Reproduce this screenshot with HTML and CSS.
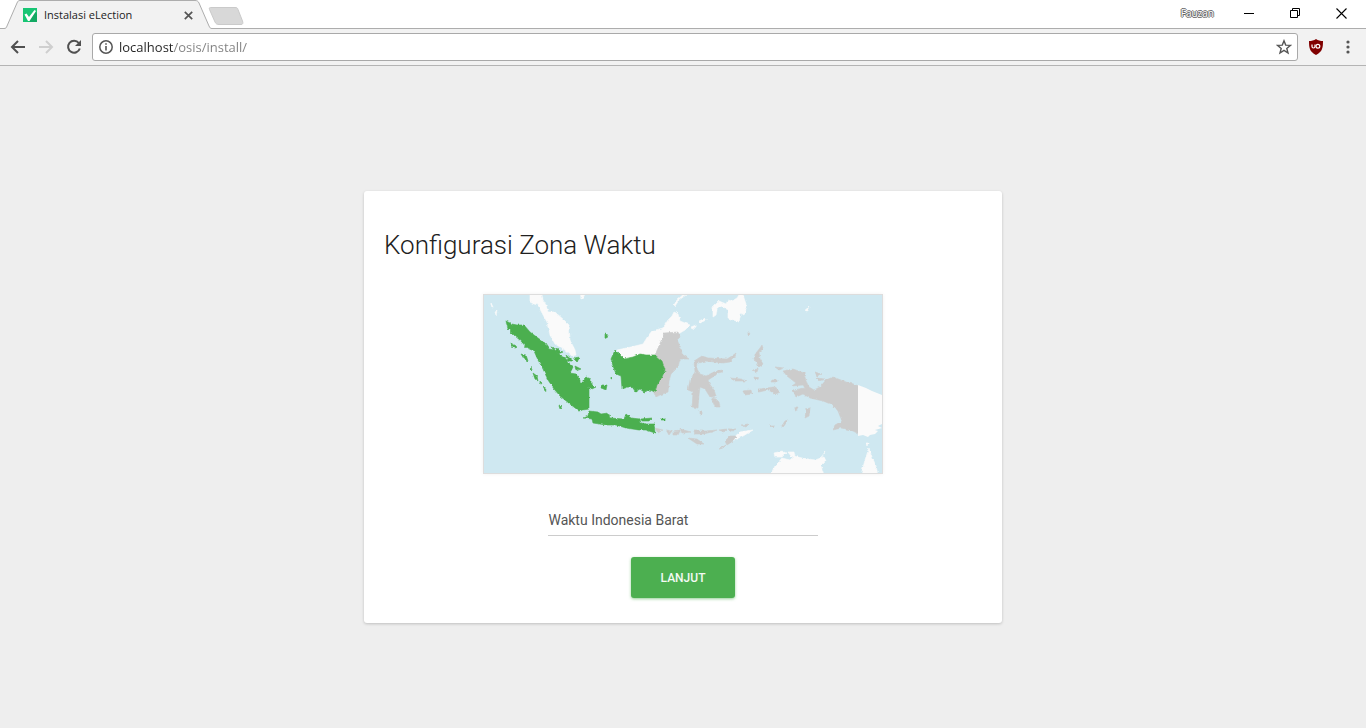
FILE: index.html
```html
<!DOCTYPE html>
<html lang="id">
<head>
<meta charset="utf-8">
<title>Instalasi eLection</title>
<link rel="stylesheet" href="styles.css">
</head>
<body>
<div class="browser">
  <header class="titlebar">
    <svg class="tab-shape" width="246" height="29" viewBox="0 0 246 29" aria-hidden="true">
      <path d="M0 28.500H4C6 28.500 6.500 27.500 7 26L17 3C18 .8 18.500.5 20 .5H195C197 .5 198 1 199 3L209 26C210 28 210.500 28.500 212 28.500V30H0Z" fill="#f2f2f2"/>
      <path d="M0 28.500H4C6 28.500 6.500 27.500 7 26L17 3C18 .8 18.500.5 20 .5H195C197 .5 198 1 199 3L209 26C210 28 210.500 28.500 212 28.500H246" fill="none" stroke="#adadad"/>
      <path d="M210.500 7.500H235C237 7.500 237.500 8 238 9.500L242.500 21C243.200 23 243 24.500 241 24.500H219C217 24.500 216 24 215 22L209.500 9.500C209 8 209.500 7.500 210.500 7.500Z" fill="#d8d8d8" stroke="#cacaca"/>
    </svg>
    <div class="tab">
      <svg class="favicon" width="14" height="14" viewBox="0 0 14 14" aria-hidden="true">
        <path d="M0 0H14V14H0Z" fill="#18c574"/>
        <path d="M12.500 4L14 5.500V14H7L5.500 12Z" fill="#13a963"/>
        <path d="M1.500 6.500L3.500 5.500L6 9L11.500 2L13 3L6.500 13H5Z" fill="#fff"/>
      </svg>
      <span class="tab-title">Instalasi eLection</span>
      <button class="icon-button" aria-label="Tutup tab">
        <svg width="9" height="9" viewBox="0 0 9 9"><path d="M.8.8L8.200 8.200M8.200.8L.8 8.200" stroke="#555" stroke-width="1.700"/></svg>
      </button>
    </div>
    <div class="window-controls">
      <span class="profile">Fauzan</span>
      <button class="icon-button" aria-label="Minimalkan"><svg width="11" height="11" viewBox="0 0 11 11"><path d="M0 5.500H10" stroke="#000"/></svg></button>
      <button class="icon-button" aria-label="Pulihkan"><svg width="11" height="11" viewBox="0 0 11 11"><path d="M.5 2.500H7.500V9.500H.5ZM2.500 2.500V.5H9.500V7.500H7.500" fill="none" stroke="#000"/></svg></button>
      <button class="icon-button" aria-label="Tutup"><svg width="11" height="11" viewBox="0 0 11 11"><path d="M.5.5L10.500 10.500M10.500.5L.5 10.500" stroke="#000" stroke-width="1.100"/></svg></button>
    </div>
  </header>
  <nav class="toolbar">
    <button class="icon-button" aria-label="Kembali"><svg width="16" height="16" viewBox="0 0 16 16"><path d="M15 8H2.500M8 2L2 8L8 14" fill="none" stroke="#505050" stroke-width="2"/></svg></button>
    <button class="icon-button" aria-label="Maju"><svg width="16" height="16" viewBox="0 0 16 16"><path d="M1 8H13.500M8 2L14 8L8 14" fill="none" stroke="#cfcfcf" stroke-width="2"/></svg></button>
    <button class="icon-button" aria-label="Muat ulang"><svg width="16" height="16" viewBox="0 0 16 16"><path d="M12.800 4A6 6 0 1 0 13.800 9.500" fill="none" stroke="#505050" stroke-width="2"/><path d="M15 1V7H9Z" fill="#505050"/></svg></button>
    <div class="address">
      <svg width="14" height="14" viewBox="0 0 14 14" aria-hidden="true"><circle cx="7" cy="7" r="6.200" fill="none" stroke="#555" stroke-width="1.500"/><path d="M7 6V10.500M7 3.200V4.800" stroke="#555" stroke-width="1.600"/></svg>
      <input class="address-input" type="text" aria-label="Alamat" value="localhost/osis/install/">
      <button class="icon-button" aria-label="Tandai"><svg width="16" height="16" viewBox="0 0 16 16"><path d="M8 1.800L9.700 6.100L14.500 6.400L10.800 9.400L12 14L8 11.400L4 14L5.200 9.400L1.500 6.400L6.300 6.100Z" fill="none" stroke="#555" stroke-width="1.400"/></svg></button>
    </div>
    <button class="icon-button" aria-label="uBlock Origin"><svg width="16" height="16" viewBox="0 0 16 16"><path d="M8 0C10 1.500 12.500 2 15 2C15 9 14.500 12.500 8 16C1.500 12.500 1 9 1 2C3.500 2 6 1.500 8 0Z" fill="#800000"/><path d="M4 5.500V7.500Q4 9 5.500 9T7 7.500V5.500" fill="none" stroke="#fff" stroke-width="1.200"/><circle cx="9.900" cy="7.200" r="1.900" fill="none" stroke="#fff" stroke-width="1.200"/></svg></button>
    <button class="icon-button menu-button" aria-label="Menu"><svg width="4" height="14" viewBox="0 0 4 14" fill="#555"><circle cx="2" cy="2" r="1.600"/><circle cx="2" cy="7" r="1.600"/><circle cx="2" cy="12" r="1.600"/></svg></button>
  </nav>
  <main class="page">
    <form class="card">
      <h1 class="card-title">Konfigurasi Zona Waktu</h1>
      <svg class="map" viewBox="484 295 398 178" role="img" aria-label="Peta Indonesia">
        <defs>
          <filter id="coast" filterUnits="userSpaceOnUse" x="484" y="295" width="398" height="178">
            <feTurbulence type="fractalNoise" baseFrequency=".28" numOctaves="2" seed="4" result="n"/>
            <feDisplacementMap in="SourceGraphic" in2="n" scale="3" xChannelSelector="R" yChannelSelector="G"/>
            <feGaussianBlur stdDeviation=".3"/>
          </filter>
        </defs>
        <g filter="url(#coast)" stroke-width=".6" stroke-linejoin="round">
          <g fill="#fafafa" stroke="#fafafa">
            <path d="M530 290H541L543 300L546 305L548 312L555 312L564 320L569 325L570 340L575 350L576 355L572 356L565 350L555 344L550 335L547 322L542 313L538 305L534 304L530 302Z"/>
            <path d="M617 350L631 347L643 344L648 336L652 331L663 328L668 320L672 316L674 312L678 314L680 321L690 325L685 330L680 333L664 334L661 341L655 357L625 361Z"/>
            <path d="M674 305L677 300L685 293L686 295L679 300L675 306ZM580 290H587L583 298L581 299Z"/>
            <path d="M713 307L719 301L726 304L728 300L732 301L737 298L742 290L744 298L747 307L744 315L741 313L739 322L728 318L728 310L722 306L717 309L716 315L713 317Z"/>
            <path d="M699 321L706 318V320L700 323ZM691 327L696 325V327L692 329ZM495 312L497 311L496 315ZM491 303L493 307L491 306ZM805 311L810 307L807 312Z"/>
            <path d="M771 475L775 466L782 458L790 460L794 456L802 458L815 460L824 457L826 461L821 466L824 475Z"/>
            <path d="M774 453L782 451L786 453L782 457L775 457ZM788 452H794L795 457L791 456ZM821 458L826 451L822 456Z"/>
            <path d="M861 475L865 460L869 448L872 457L876 466L878 475ZM866 443L868 443L867 446Z"/>
            <path d="M732 439L740 432L753 430L743 436L732 441Z"/>
          </g>
          <g fill="#ccc" stroke="#ccc">
            <path d="M664 333L678 332L680 337L677 340L681 348L682 354L689 359L680 359L678 367L671 374L669 381L668 392L660 395L656 397L653 391L657 384L664 374L661 361L655 355L661 341Z"/>
            <path d="M694 361L702 356L708 358L727 359L732 356L736 353L735 357L730 362L723 363L706 361L698 363L697 369L700 374L706 376L714 372L718 371L716 375L708 380L709 383L714 390L716 396L710 397L705 389L700 387L699 395L698 408L692 407L693 392L688 390L690 380L695 372Z"/>
            <path d="M711 398L716 399L719 402L720 407L715 407L713 402ZM717 371L723 370L722 373L718 374ZM730 378L741 379L747 381H735ZM743 391L751 390L752 394L745 395ZM759 389L774 387L780 392L776 394L768 390L759 392ZM700 411H702V414H700Z"/>
            <path d="M756 353L760 348L762 345L763 349L759 352L760 359L763 364L759 367L757 363L754 359ZM752 370L758 369L757 372ZM754 377L759 378L755 380ZM775 367L784 368L779 370ZM772 380H777V382H771ZM748 331L750 334L748 336ZM815 372L821 374L817 376ZM816 378L825 379L819 381Z"/>
            <path d="M783 371L793 369L804 373L806 381L809 387L814 390L820 387L826 380L833 377L846 382L859 386V434L851 430L841 428L833 430L835 425L842 421L838 411L833 405L823 401L810 398L803 394L796 397L793 390L805 388L803 385L792 386L796 383L787 376Z"/>
            <path d="M805 418L806 409L810 408L809 416ZM781 427L785 421L788 420L784 426ZM794 410L796 407L798 407L796 411ZM770 426L774 426L772 428Z"/>
            <path d="M655 428L663 430L658 433ZM666 430L672 431L669 435ZM673 432L680 431L678 435L673 435ZM680 429L691 432L682 433ZM694 431L705 431L717 430L712 432L703 434H695ZM719 430L727 429L724 432ZM728 429L736 429L732 431ZM741 425L749 424L746 427ZM688 438L697 439L704 444H697ZM719 449L726 445L723 448Z"/>
            <path d="M725 441L730 436L736 436L733 441L727 445Z"/>
          </g>
          <g fill="#4caf50" stroke="#4caf50">
            <path d="M506 321L512 324L517 325L524 325L530 332L538 338L545 343L549 349L555 350L559 355L565 358L568 361L569 364L573 367L570 373L576 374L580 380L580 383L587 383L589 388V409L583 410L579 411L570 404L560 396L554 389L548 380L543 369L538 360L534 351L527 348L521 341L515 336L508 329Z"/>
            <path d="M583 384L583 380L586 377L591 379L591 384L596 387L592 389L587 386ZM602 385L607 385L606 390L601 388ZM573 358L580 357L577 362ZM575 366L581 369L576 371ZM605 334L608 335L607 338L605 337ZM551 347L563 352L558 354ZM566 355L573 361L568 361ZM611 376L613 378L611 379Z"/>
            <path d="M510 343L517 347L514 348ZM521 354L526 355L528 361L524 359ZM531 366L532 371L530 369ZM533 373L537 376L538 381L535 379ZM540 381L542 384L540 383ZM543 386L547 391L545 390ZM559 406L562 407L560 409Z"/>
            <path d="M615 350L620 355L624 359L633 357L640 354L646 355L655 355L662 361L665 370L662 377L657 385L655 392L650 390L644 392L640 389L635 392L634 388L628 387L622 389L621 376L616 374L613 366L611 359Z"/>
            <path d="M589 411L598 412L601 414L608 413L610 418L624 419L626 414L631 418L640 419L641 423L646 424L654 424L655 433L646 430L639 430L626 428L616 425L606 425L593 423L592 419L584 418L588 416ZM641 419L652 418L649 421L642 421ZM661 419H665V420H661Z"/>
          </g>
        </g>
        <path d="M858 385L866 388L872 391L882 395V424L878 426L882 428L875 430L878 431L875 434L870 435L868 437L863 435L858 436Z" fill="#fafafa"/>
      </svg>
      <select class="zone" aria-label="Zona waktu"><option>Waktu Indonesia Barat</option></select>
      <button class="submit" type="button">LANJUT</button>
    </form>
  </main>
</div>
</body>
</html>
```
FILE: styles.css
```css
* { box-sizing: border-box; }
body { margin: 0; background: #eee; font-family: Roboto, sans-serif; }
button { font: inherit; border: 0; cursor: pointer; }
.browser { min-height: 100vh; display: flex; flex-direction: column; }
.icon-button { padding: 0; background: none; display: flex; align-items: center; justify-content: center; }

.titlebar {
  position: relative;
  height: 29px;
  display: flex;
  justify-content: space-between;
  background: #fff;
  border-bottom: 1px solid #adadad;
  font-family: "Open Sans", sans-serif;
}
.tab-shape { position: absolute; left: 0; top: 0; }
.tab { position: relative; width: 216px; padding: 2px 23px 0 23px; display: flex; align-items: center; gap: 7px; }
.tab-title { flex: 1; font-size: 11px; line-height: 16px; color: #222; white-space: nowrap; }
.window-controls { display: flex; align-items: center; gap: 35px; padding: 0 19px 2px 0; }
.profile {
  margin-right: -5px;
  font-size: 10px;
  color: #fff;
  text-shadow: 1px 0 #666, -1px 0 #666, 0 1px #666, 0 -1px #666;
}

.toolbar {
  height: 37px;
  padding: 0 16px 0 10px;
  display: flex;
  align-items: center;
  gap: 12px;
  background: #f2f2f2;
  border-bottom: 1px solid #b4b4b4;
}
.address {
  flex: 1;
  height: 28px;
  margin: 0 -2px;
  padding: 0 5px 0 6px;
  display: flex;
  align-items: center;
  gap: 6px;
  background: #fff;
  border: 1px solid #a9a9a9;
  border-radius: 3px;
}
.address-input {
  flex: 1;
  min-width: 0;
  padding: 0;
  border: 0;
  outline: 0;
  font: 13px/20px "Open Sans", sans-serif;
  color: transparent;
  background: linear-gradient(90deg, #222 55px, #808080 55px);
  -webkit-background-clip: text;
  background-clip: text;
}
.menu-button { margin-left: 10px; }

.page { flex: 1; display: flex; align-items: center; justify-content: center; padding: 20px; }
.card {
  width: 638px;
  max-width: 100%;
  margin-top: 20px;
  padding: 36px 20px 25px;
  display: flex;
  flex-direction: column;
  align-items: center;
  background: #fff;
  border-radius: 3px;
  box-shadow: 0 1px 3px rgba(0, 0, 0, .2);
}
.card-title { align-self: stretch; margin: 0 0 31px; font-size: 26px; line-height: 36px; font-weight: 300; color: #212121; }
.map {
  width: 100%;
  max-width: 400px;
  border: 1px solid #ddd;
  background: #cfe8f1;
  box-shadow: 0 0 4px rgba(0, 0, 0, .06);
}
.zone {
  appearance: none;
  width: 45%;
  height: 32px;
  margin: 30px 0 21px;
  padding: 0;
  border: 0;
  border-bottom: 1px solid #ccc;
  border-radius: 0;
  background: transparent;
  font: 14px/20px Roboto, sans-serif;
  color: #555;
}
.submit {
  min-width: 104px;
  height: 41px;
  padding: 0 28px;
  border-radius: 3px;
  background: #4caf50;
  box-shadow: 0 1px 3px rgba(76, 175, 80, .6);
  color: #f4faf4;
  font-size: 12px;
  line-height: 20px;
  font-weight: 500;
}
```
